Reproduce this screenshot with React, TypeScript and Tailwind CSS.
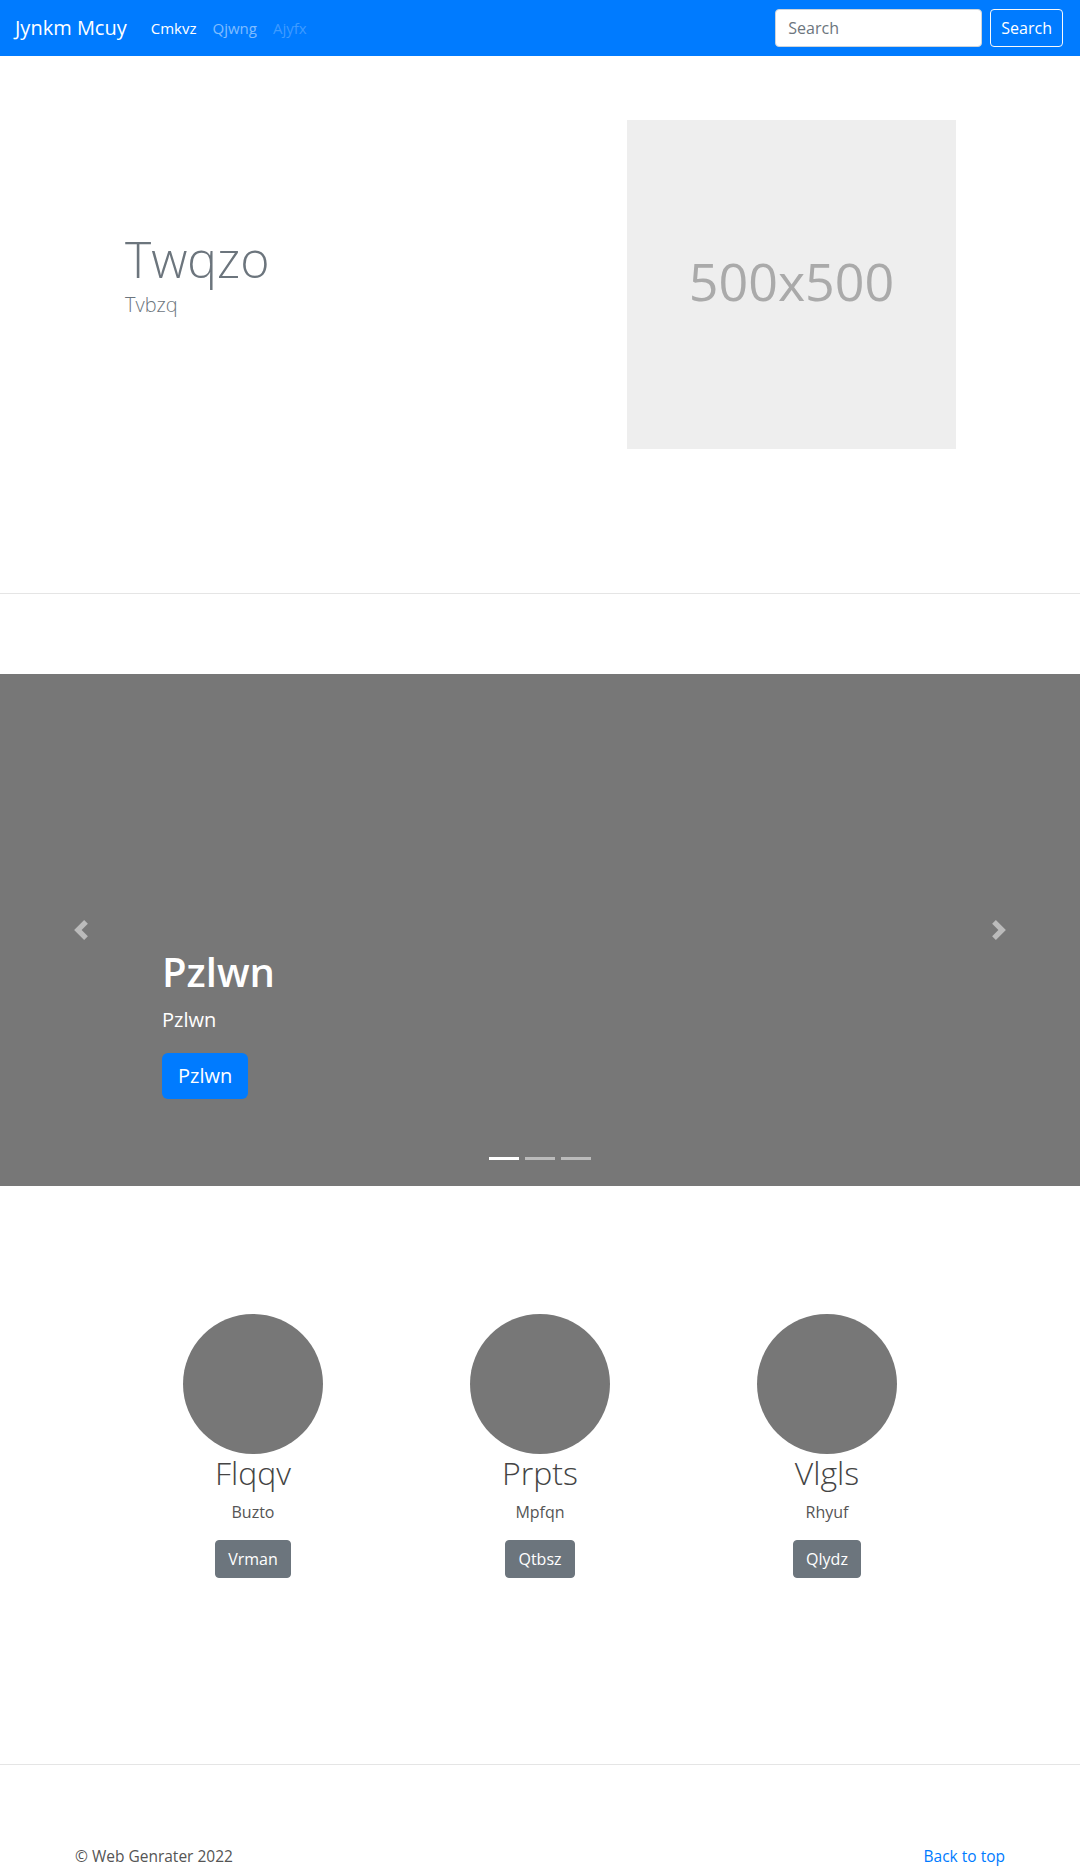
import React from 'react';

const features = [
  { title: 'Flqqv', text: 'Buzto', action: 'Vrman' },
  { title: 'Prpts', text: 'Mpfqn', action: 'Qtbsz' },
  { title: 'Vlgls', text: 'Rhyuf', action: 'Qlydz' }
];

function Chevron({ dir }: { dir: 'left' | 'right' }) {
  return (
    <svg viewBox="0 0 8 8" className="h-5 w-5" fill="#bbbbbb">
      {dir === 'left' ? (
        <path d="M5.25 0l-4 4 4 4 1.5-1.5L4.25 4l2.5-2.5L5.25 0z" />
      ) : (
        <path d="M2.75 0l-1.5 1.5L3.75 4l-2.5 2.5L2.75 8l4-4-4-4z" />
      )}
    </svg>
  );
}

export default function App() {
  return (
    <div className="min-h-[1868px] bg-white font-['Open_Sans',sans-serif] text-base text-[#212529]">
      {/* navbar */}
      <nav className="flex h-14 items-center bg-[#007bff] pl-[15px] pr-[17px]">
        <a href="#" className="mr-4 text-xl leading-[30px] text-white">Jynkm Mcuy</a>
        <ul className="flex text-[15px]">
          <li><a href="#" className="block px-2 text-white">Cmkvz</a></li>
          <li><a href="#" className="block px-2 text-white/50">Qjwng</a></li>
          <li><a href="#" className="block px-2 text-white/25">Ajyfx</a></li>
        </ul>
        <form className="ml-auto flex items-center" onSubmit={(e) => e.preventDefault()}>
          <input
            type="text"
            placeholder="Search"
            className="h-[38px] w-[207px] rounded border border-[#ced4da] bg-white px-3 text-[#495057] placeholder-[#6c757d] focus:outline-none"
          />
          <button className="ml-2 h-[38px] rounded border border-[#f8f9fa] px-[10px] text-white">Search</button>
        </form>
      </nav>

      {/* hero */}
      <section className="h-[537px] pt-16">
        <div className="mx-auto flex w-[930px]">
          <div className="flex w-[465px] flex-col pl-[50px] pt-[109px]">
            <h1 className="h-[60px] text-[50px] font-light leading-[60px] text-[#6c757d]">Twqzo</h1>
            <p className="mt-1 text-xl font-light leading-6 text-[#6c757d]">Tvbzq</p>
          </div>
          <div className="w-[465px] pl-[87px]">
            <div className="flex h-[329px] w-[329px] items-center justify-center bg-[#eeeeee] pb-2 text-[52px] text-[#aaaaaa]">
              500x500
            </div>
          </div>
        </div>
      </section>

      <hr className="border-t border-[#e5e5e5]" />

      {/* carousel */}
      <section className="mt-20 mb-32">
        <div className="relative h-[512px] bg-[#777777]">
          <button className="absolute inset-y-0 left-0 flex w-[15%] items-center justify-center">
            <Chevron dir="left" />
          </button>
          <button className="absolute inset-y-0 right-0 flex w-[15%] items-center justify-center">
            <Chevron dir="right" />
          </button>
          <div className="absolute bottom-[51px] left-[15%] right-[15%] py-5 text-white">
            <h1 className="mb-[10px] text-[40px] font-semibold leading-[1.2]">Pzlwn</h1>
            <p className="mb-[19px] text-xl">Pzlwn</p>
            <p className="mb-4">
              <a href="#" className="inline-block rounded-md bg-[#007bff] px-4 py-2 text-xl leading-[1.5] text-white">Pzlwn</a>
            </p>
          </div>
          <div className="absolute bottom-[26px] left-0 right-0 flex justify-center gap-[6px]">
            <span className="h-[3px] w-[30px] bg-white" />
            <span className="h-[3px] w-[30px] bg-white/50" />
            <span className="h-[3px] w-[30px] bg-white/50" />
          </div>
        </div>
      </section>

      {/* marketing */}
      <section className="flex justify-center">
        {features.map((f) => (
          <div key={f.title} className="flex w-[287px] flex-col items-center text-center">
            <div className="h-[140px] w-[140px] rounded-full bg-[#777777]" />
            <h2 className="mb-2 text-[32px] font-light leading-[1.2] text-[#444444]">{f.title}</h2>
            <p className="mb-4 text-[#555555]">{f.text}</p>
            <a href="#" className="rounded border border-[#6c757d] bg-[#6c757d] px-3 py-1.5 text-white">{f.action}</a>
          </div>
        ))}
      </section>

      <hr className="mt-[186px] border-t border-[#e5e5e5]" />

      {/* footer */}
      <footer className="mx-auto flex w-[930px] justify-between pt-20">
        <p className="text-[15.5px] text-[#555555]">© Web Genrater 2022</p>
        <a href="#" className="text-[15.5px] text-[#007bff]">Back to top</a>
      </footer>
    </div>
  );
}
